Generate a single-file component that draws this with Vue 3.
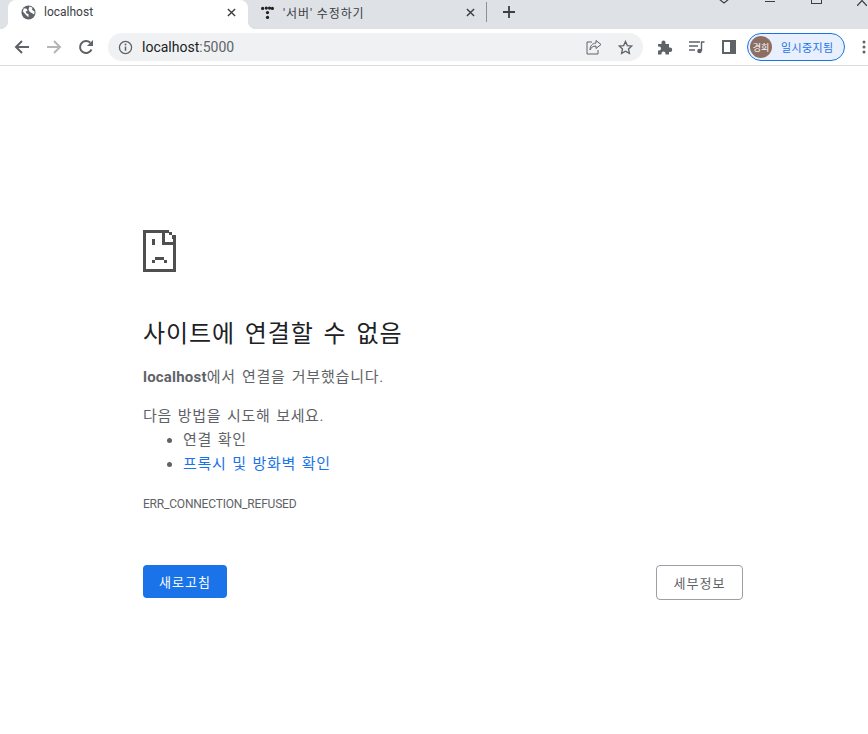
<script setup>
const tips = [
  { text: '연결 확인', link: false },
  { text: '프록시 및 방화벽 확인', link: true },
]
</script>

<template>
  <div class="browser">
    <!-- 탭 -->
    <div class="tab-strip">
      <div class="tab active">
        <svg class="favicon" viewBox="0 0 16 16"><circle cx="8" cy="8" r="7.500" fill="#5f6368"/><path d="M3 3.500l3 .5 1 2-2 1 1 2 2 .5v3.500L5.500 11 2 7zM9 1.500l3.500 1.500-1 1.500L13 6l1.500 1-.5 3-2.500-1.500-2-1L8 5z" fill="#fff"/></svg>
        <span class="tab-title">localhost</span>
        <svg class="close" viewBox="0 0 10 10"><path d="M1 1l8 8M9 1l-8 8" stroke="#3c4043" stroke-width="1.600"/></svg>
      </div>
      <div class="tab second">
        <svg class="favicon" viewBox="0 0 16 16" fill="#202124"><circle cx="2" cy="3" r="2"/><circle cx="6.500" cy="2.500" r="2"/><circle cx="10.500" cy="2.500" r="2"/><circle cx="14" cy="3" r="2"/><circle cx="8" cy="8" r="2"/><circle cx="8" cy="14" r="2"/></svg>
        <span class="tab-title">'서버' 수정하기</span>
        <svg class="close" viewBox="0 0 10 10"><path d="M1 1l8 8M9 1l-8 8" stroke="#3c4043" stroke-width="1.600"/></svg>
      </div>
      <div class="tab-sep"></div>
      <svg class="new-tab" viewBox="0 0 12 12"><path d="M6 0v12M0 6h12" stroke="#3c4043" stroke-width="1.800"/></svg>
      <div class="window-controls">
        <svg viewBox="0 0 10 4" class="win-chevron"><path d="M0 -1l5 4 5-4" fill="none" stroke="#3c4043" stroke-width="1.200"/></svg>
        <div class="win-min"></div>
        <div class="win-max"></div>
        <svg viewBox="0 0 10 6" class="win-close"><path d="M0 6l5-5.500 5 5.500" fill="none" stroke="#3c4043" stroke-width="1.200"/></svg>
      </div>
    </div>

    <!-- 주소창 -->
    <div class="toolbar">
      <svg class="nav" viewBox="0 0 16 16"><path d="M15 8H2M8 2L2 8l6 6" fill="none" stroke="#5f6368" stroke-width="2"/></svg>
      <svg class="nav" viewBox="0 0 16 16"><path d="M1 8h13M8 2l6 6-6 6" fill="none" stroke="#b4b6b9" stroke-width="2"/></svg>
      <svg class="nav" viewBox="0 0 16 16"><path d="M13.500 10.500A6 6 0 1 1 12.300 3.800" fill="none" stroke="#5f6368" stroke-width="2"/><path d="M15 1v6H9z" fill="#5f6368"/></svg>
      <div class="omnibox">
        <svg class="info" viewBox="0 0 16 16"><circle cx="8" cy="8" r="6.500" fill="none" stroke="#5f6368" stroke-width="1.400"/><path d="M8 7v4.500" stroke="#5f6368" stroke-width="1.600"/><circle cx="8" cy="4.800" r="1" fill="#5f6368"/></svg>
        <span class="url">localhost<span class="port">:5000</span></span>
        <svg class="omni-share" viewBox="0 0 16 16"><path d="M6 3H1v12h11v-4" fill="none" stroke="#5f6368" stroke-width="1"/><path d="M10 1.500l5 4-5 4V7C7 7 5 8.500 4 11c0-4 2-6.500 6-7z" fill="none" stroke="#5f6368" stroke-width="1"/></svg>
        <svg class="omni-star" viewBox="0 0 16 16"><path d="M8 1.500l2 4.400 4.700.5-3.500 3.200 1 4.700L8 11.900l-4.200 2.400 1-4.700L1.300 6.400 6 5.900z" fill="none" stroke="#5f6368" stroke-width="1.400"/></svg>
      </div>
      <svg class="ext" viewBox="0 0 16 16"><path d="M1 5h3.500V3.500a2 2 0 0 1 4 0V5H12v3.500h1a2.200 2.200 0 0 1 0 4.500h-1v2.500H8.500v-1a2 2 0 0 0-4 0v1H1v-4h1a2 2 0 0 0 0-4H1z" fill="#5f6368"/></svg>
      <svg class="media" viewBox="0 0 16 14"><path d="M0 2h11M0 6h9M0 10h6" stroke="#5f6368" stroke-width="1.300"/><path d="M12 2h3.500M12.500 2v9" fill="none" stroke="#5f6368" stroke-width="1.400"/><circle cx="10.500" cy="11" r="2.300" fill="#5f6368"/></svg>
      <svg class="side" viewBox="0 0 14 14"><path d="M0 0h14v14H0z" fill="#5f6368"/><path d="M2 2h6v10H2z" fill="#fff"/></svg>
      <div class="profile">
        <div class="avatar">경희</div>
        <span class="profile-text">일시중지됨</span>
      </div>
      <svg class="kebab" viewBox="0 0 4 14" fill="#5f6368"><circle cx="2" cy="2" r="1.500"/><circle cx="2" cy="7" r="1.500"/><circle cx="2" cy="12" r="1.500"/></svg>
    </div>

    <!-- 오류 페이지 -->
    <main class="error-page">
      <svg class="sad-icon" viewBox="0 0 33 42" shape-rendering="crispEdges" fill="#4f4f4f">
        <path d="M0 0h26v3H3v36h27V13h3v29H0z"/>
        <path d="M26 2h3v3h-3zM29 5h4v4h-4zM30 9h3v4h-3z"/>
        <path d="M19 0h3v12h11v3H22H19z"/>
        <path d="M9 9h3v6H9z"/>
        <path d="M12 27h9v3h-9zM9 30h3v3H9zM21 30h3v3h-3z"/>
      </svg>
      <h1>사이트에 연결할 수 없음</h1>
      <p class="summary"><strong>localhost</strong>에서 연결을 거부했습니다.</p>
      <p class="try-text">다음 방법을 시도해 보세요.</p>
      <ul>
        <li v-for="tip in tips" :key="tip.text">
          <a v-if="tip.link" href="#">{{ tip.text }}</a>
          <template v-else>{{ tip.text }}</template>
        </li>
      </ul>
      <div class="err-code">ERR_CONNECTION_REFUSED</div>
      <div class="actions">
        <button class="btn-reload">새로고침</button>
        <button class="btn-details">세부정보</button>
      </div>
    </main>
  </div>
</template>

<style>
html, body {
  margin: 0;
  background: #fff;
}
</style>

<style scoped>
.browser {
  width: 868px;
  height: 734px;
  overflow: hidden;
  display: flex;
  flex-direction: column;
  background: #fff;
  font-family: Roboto, "Noto Sans CJK KR", sans-serif;
}

.tab-strip {
  height: 29px;
  flex-shrink: 0;
  background: #dee1e6;
  display: flex;
  align-items: center;
  padding-left: 8px;
  position: relative;
}

.tab {
  width: 240px;
  height: 29px;
  box-sizing: border-box;
  padding: 0 12px 5px 13px;
  display: flex;
  align-items: center;
  position: relative;
}

.tab.second {
  padding-right: 13px;
}

.tab.active {
  background: #fff;
  border-radius: 8px 8px 0 0;
}

.tab.active::before,
.tab.active::after {
  content: "";
  position: absolute;
  bottom: 0;
  width: 8px;
  height: 8px;
}

.tab.active::before {
  left: -8px;
  background: radial-gradient(circle at 0 0, #dee1e6 8px, #fff 8.500px);
}

.tab.active::after {
  right: -8px;
  background: radial-gradient(circle at 100% 0, #dee1e6 8px, #fff 8.500px);
}

.favicon {
  width: 15px;
  height: 15px;
  margin-right: 8px;
  flex-shrink: 0;
}

.second .favicon {
  width: 13px;
  height: 13px;
  margin-left: 0;
  margin-right: 9px;
}

.tab-title {
  flex: 1;
  font-size: 12px;
  color: #3c4043;
  white-space: nowrap;
}

.second .tab-title {
  letter-spacing: 0.9px;
}

.close {
  width: 9px;
  height: 9px;
}

.tab-sep {
  width: 1px;
  height: 20px;
  margin-left: -2px;
  margin-bottom: 5px;
  background: #8f9194;
}

.new-tab {
  width: 12px;
  height: 12px;
  margin-left: 16px;
  margin-bottom: 5px;
}

/* 창이 화면 위로 잘려 있어서 버튼 아랫부분만 보인다 */
.window-controls {
  position: absolute;
  top: 0;
  left: 0;
  width: 100%;
  height: 6px;
  overflow: hidden;
}

.win-chevron {
  position: absolute;
  left: 719px;
  top: 0;
  width: 10px;
  height: 4px;
}

.win-min {
  position: absolute;
  left: 765px;
  top: 1px;
  width: 10px;
  height: 1px;
  background: #3c4043;
}

.win-max {
  position: absolute;
  left: 811px;
  top: -6px;
  width: 9px;
  height: 9px;
  border: 1px solid #3c4043;
  border-top: none;
}

.win-close {
  position: absolute;
  left: 857px;
  top: 0;
  width: 10px;
  height: 6px;
}

.toolbar {
  height: 36px;
  flex-shrink: 0;
  border-bottom: 1px solid #dadce0;
  display: flex;
  align-items: center;
  padding-left: 14px;
}

.nav {
  width: 16px;
  height: 16px;
  margin-right: 16px;
  flex-shrink: 0;
}

.omnibox {
  width: 535px;
  height: 28px;
  margin-left: -2px;
  background: #eff1f3;
  border-radius: 14px;
  display: flex;
  align-items: center;
  padding: 0 10px;
  box-sizing: border-box;
}

.info {
  width: 15px;
  height: 15px;
  margin-right: 9px;
}

.url {
  flex: 1;
  font-size: 14px;
  color: #202124;
}

.port {
  color: #5f6368;
}

.omni-share {
  width: 16px;
  height: 16px;
  margin-right: 16px;
  margin-left: 1px;
}

.omni-star {
  width: 15px;
  height: 15px;
}

.ext {
  width: 16px;
  height: 16px;
  margin-left: 14px;
}

.media {
  width: 16px;
  height: 14px;
  margin-left: 16px;
}

.side {
  width: 14px;
  height: 14px;
  margin-left: 17px;
}

.profile {
  width: 98px;
  height: 28px;
  box-sizing: border-box;
  margin-left: 11px;
  border: 1px solid #1a73e8;
  border-radius: 14px;
  background: #e8f0fe;
  display: flex;
  align-items: center;
  padding-left: 2px;
}

.avatar {
  width: 22px;
  height: 22px;
  border-radius: 50%;
  background: #8d6e63;
  color: #fff;
  font-size: 9px;
  display: flex;
  align-items: center;
  justify-content: center;
}

.profile-text {
  margin-left: 9px;
  font-size: 11px;
  letter-spacing: 0.4px;
  color: #1a73e8;
  white-space: nowrap;
}

.kebab {
  width: 4px;
  height: 14px;
  margin-left: 17px;
}

.error-page {
  padding: 164px 125px 0 143px;
}

.sad-icon {
  display: block;
  width: 33px;
  height: 42px;
}

h1 {
  margin: 44px 0 0;
  font-size: 24px;
  font-weight: 400;
  line-height: 36px;
  letter-spacing: 0.9px;
  word-spacing: 3px;
  color: #202124;
}

.summary,
.try-text,
ul {
  font-size: 15px;
  line-height: 24px;
  letter-spacing: 0.65px;
  word-spacing: 1.5px;
  color: #5f6368;
}

.summary {
  margin: 13px 0 0;
  letter-spacing: 0.8px;
}

.summary strong {
  font-weight: 700;
  letter-spacing: 0.2px;
}

.try-text {
  margin: 15px 0 0;
}

ul {
  margin: 0;
  padding-left: 40px;
}

a {
  color: #1a73e8;
  text-decoration: none;
}

.err-code {
  margin-top: 20px;
  font-size: 12px;
  line-height: 16px;
  letter-spacing: -0.2px;
  color: #5f6368;
}

.actions {
  margin-top: 53px;
  display: flex;
  justify-content: space-between;
  align-items: flex-start;
}

button {
  font-family: inherit;
  font-size: 13px;
  letter-spacing: 1px;
  cursor: pointer;
}

.btn-reload {
  width: 84px;
  height: 33px;
  background: #1a73e8;
  color: #fff;
  border: none;
  border-radius: 4px;
}

.btn-details {
  width: 87px;
  height: 35px;
  background: #fff;
  color: #5f6368;
  border: 1px solid #9aa0a6;
  border-radius: 4px;
}
</style>
